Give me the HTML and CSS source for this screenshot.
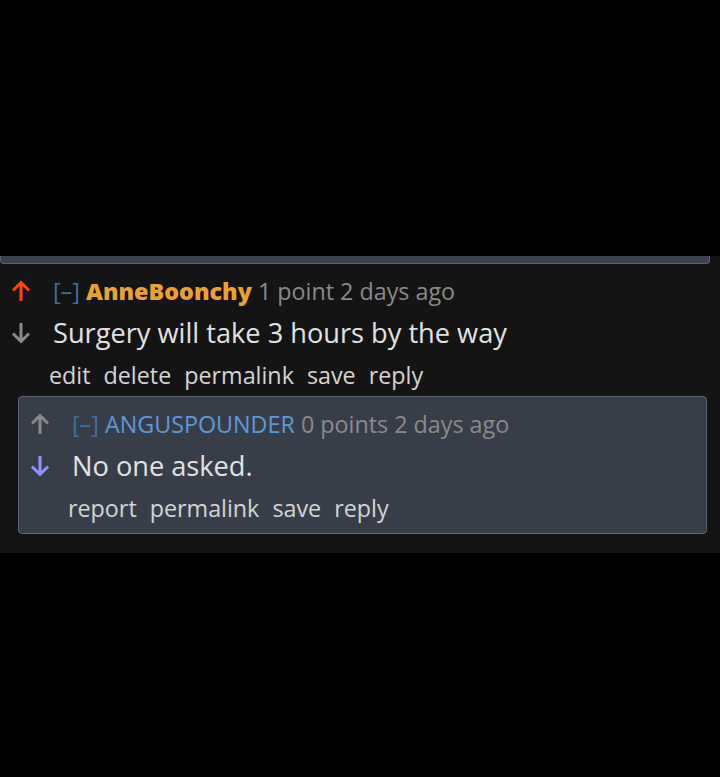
FILE: index.html
```html
<!DOCTYPE html>
<html lang="en">
<head>
    <meta charset="UTF-8">
    <meta name="viewport" content="width=device-width, initial-scale=1.0">
    <title>Comments</title>
    <link rel="stylesheet" href="styles.css">
</head>
<body>
    <div class="top-space"></div>

    <div class="panel">
        <!-- end of the previous comment box -->
        <div class="prev-box"></div>

        <div class="comment">
            <div class="votes">
                <svg class="arrow up-on" viewBox="0 0 22 22"><path d="M11 21V2.5 M3 10.5l8-8 8 8"/></svg>
                <svg class="arrow" viewBox="0 0 22 22"><path d="M11 1v18.5 M3 11.5l8 8 8-8"/></svg>
            </div>
            <div class="entry">
                <div class="tagline">
                    <span class="toggle">[–]</span>
                    <span class="author op">AnneBoonchy</span>
                    <span class="meta">1 point 2 days ago</span>
                </div>
                <div class="body">Surgery will take 3 hours by the way</div>
                <div class="actions">
                    <span>edit</span><span>delete</span><span>permalink</span><span>save</span><span>reply</span>
                </div>
            </div>
        </div>

        <div class="child">
            <div class="comment">
                <div class="votes">
                    <svg class="arrow" viewBox="0 0 22 22"><path d="M11 21V2.5 M3 10.5l8-8 8 8"/></svg>
                    <svg class="arrow down-on" viewBox="0 0 22 22"><path d="M11 1v18.5 M3 11.5l8 8 8-8"/></svg>
                </div>
                <div class="entry">
                    <div class="tagline">
                        <span class="toggle">[–]</span>
                        <span class="author">ANGUSPOUNDER</span>
                        <span class="meta">0 points 2 days ago</span>
                    </div>
                    <div class="body">No one asked.</div>
                    <div class="actions">
                        <span>report</span><span>permalink</span><span>save</span><span>reply</span>
                    </div>
                </div>
            </div>
        </div>
    </div>
</body>
</html>
```

FILE: styles.css
```css
* {
    margin: 0;
    padding: 0;
    box-sizing: border-box;
}
body {
    background: #000;
    font-family: "Open Sans", "Noto Sans", Arial, sans-serif;
    color: #dcdcdc;
}
.top-space {
    height: 256px;
}
.panel {
    background: #141414;
    padding-bottom: 19px;
}
.prev-box {
    height: 8px;
    margin-right: 10px;
    background: #3b424e;
    border: 1px solid #5d6573;
    border-top: none;
    border-radius: 0 0 4px 4px;
}
.comment {
    display: flex;
    padding: 6px 0 0 10px;
}
.votes {
    display: flex;
    flex-direction: column;
    width: 43px;
}
.arrow {
    width: 22px;
    height: 22px;
    margin: 10px 0;
    fill: none;
    stroke: #8b8b8b;
    stroke-width: 3;
}
.up-on {
    stroke: #ff4500;
}
.down-on {
    stroke: #9494ff;
}
.entry {
    line-height: 42px;
}
.tagline {
    font-size: 23.3px;
    color: #8a8a8a;
}
.toggle {
    color: #3f6f9f;
}
.author {
    color: #5a9ad8;
}
.author.op {
    color: #eba232;
    font-weight: 800;
}
.body {
    font-size: 27.2px;
    color: #e2e2e2;
}
.actions {
    font-size: 23.3px;
    color: #d4d4d4;
    margin-left: -4px;
}
.actions span {
    margin-right: 13px;
}
.child {
    margin: 0 13px 0 18px;
    background: #373e4a;
    border: 1px solid #5d6573;
    border-radius: 4px;
    padding-bottom: 4px;
}
```
